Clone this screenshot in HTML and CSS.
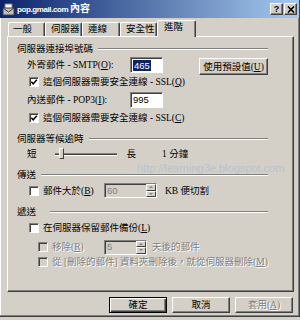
FILE: index.html
```html
<!DOCTYPE html>
<html lang="zh-Hant">
<head>
    <meta charset="UTF-8">
    <meta name="viewport" content="width=device-width, initial-scale=1.0">
    <title>pop.gmail.com 內容</title>
    <link rel="stylesheet" href="styles.css">
</head>
<body>
    <div class="window">
        <div class="titlebar">
            <svg class="title-icon" viewBox="0 0 13 13">
                <path d="M3 1h7v6H3z" fill="#fff" stroke="#808080"/>
                <path d="M1 5h11v7H1z" fill="#c0c0c0" stroke="#404040"/>
                <path d="M1 5l5.5 4L12 5" fill="none" stroke="#404040"/>
            </svg>
            <span class="title-text">pop.gmail.com <span class="cjk">內容</span></span>
            <div class="title-buttons">
                <span class="title-btn">?</span>
                <span class="title-btn">
                    <svg viewBox="0 0 8 7" width="8" height="7"><path d="M1 0.5l6 6M7 0.5l-6 6" stroke="#000" stroke-width="1.6"/></svg>
                </span>
            </div>
        </div>

        <div class="tabs">
            <div class="tab tab-general">一般</div>
            <div class="tab tab-server">伺服器</div>
            <div class="tab tab-connect">連線</div>
            <div class="tab tab-security">安全性</div>
            <div class="tab tab-advanced active">進階</div>
        </div>

        <div class="panel">
            <div class="group-title">伺服器連接埠號碼</div>
            <div class="row row-tall">
                <span class="label">外寄郵件 - SMTP(<u>O</u>):</span>
                <span class="field port"><span class="selected">465</span></span>
                <span class="btn defaults">使用預設值(<u>U</u>)</span>
            </div>
            <div class="row">
                <span class="check"><svg viewBox="0 0 8 8"><path d="M1.3 3.8l1.9 2 3.6-4" fill="none" stroke="#000" stroke-width="1.5"/></svg></span>
                <span>這個伺服器需要安全連線 - SSL(<u>Q</u>)</span>
            </div>
            <div class="row row-field gap">
                <span class="label">內送郵件 - POP3(<u>I</u>):</span>
                <span class="field port">995</span>
            </div>
            <div class="row gap">
                <span class="check"><svg viewBox="0 0 8 8"><path d="M1.3 3.8l1.9 2 3.6-4" fill="none" stroke="#000" stroke-width="1.5"/></svg></span>
                <span>這個伺服器需要安全連線 - SSL(<u>C</u>)</span>
            </div>

            <div class="group-title">伺服器等候逾時</div>
            <div class="row">
                <span>短</span>
                <span class="slider"><span class="thumb"></span></span>
                <span>長</span>
                <span class="timeout">1 分鐘</span>
            </div>

            <div class="group-title">傳送</div>
            <div class="row row-spin">
                <span class="check"></span>
                <span class="size-label">郵件大於(<u>B</u>)</span>
                <span class="field spinner size-field">60<span class="spin"><i class="up"></i><i class="down"></i></span></span>
                <span class="unit">KB 便切割</span>
            </div>

            <div class="group-title wide">遞送</div>
            <div class="row gap-sm">
                <span class="check"></span>
                <span>在伺服器保留郵件備份(<u>L</u>)</span>
            </div>
            <div class="row indent disabled gap-lg">
                <span class="check"></span>
                <span class="remove-label">移除(<u>R</u>)</span>
                <span class="field spinner days-field">5<span class="spin"><i class="up"></i><i class="down"></i></span></span>
                <span class="days">天後的郵件</span>
            </div>
            <div class="row indent disabled">
                <span class="check"></span>
                <span>從 [刪除的郵件] 資料夾刪除後，就從伺服器刪除(<u>M</u>)</span>
            </div>
        </div>

        <div class="actions">
            <span class="action default">確定</span>
            <span class="action">取消</span>
            <span class="action disabled">套用(<u>A</u>)</span>
        </div>

        <div class="watermark">http://learning3e.blogspot.com</div>
    </div>
</body>
</html>
```

FILE: styles.css
```css
* {
    box-sizing: border-box;
}

body {
    margin: 0;
    width: 300px;
    height: 320px;
    overflow: hidden;
    background: #d4d0c8;
    font-family: "Liberation Serif", "Noto Sans CJK TC", serif;
    font-size: 9.5px;
    line-height: 14px;
    color: #000;
}

u {
    text-underline-offset: 1px;
}

.window {
    position: relative;
    height: 317px;
    border-right: 1px solid #404040;
    border-bottom: 1px solid #404040;
    box-shadow: inset -1px -1px #808080, inset 1px 0 #fff;
}

/* title bar */
.titlebar {
    height: 18px;
    display: flex;
    align-items: center;
    padding: 0 2px 0 2px;
    background: linear-gradient(to right, #0a246a, #a6caf0);
    color: #fff;
}

.title-icon {
    width: 13px;
    height: 13px;
    margin-right: 2px;
}

.title-text {
    font-family: "Liberation Sans", "Noto Sans CJK TC", sans-serif;
    font-weight: bold;
    font-size: 8px;
    letter-spacing: -0.4px;
}

.title-text .cjk {
    font-size: 10px;
    letter-spacing: 0;
}

.title-buttons {
    margin-left: auto;
    display: flex;
    gap: 1px;
}

.title-btn {
    width: 13px;
    height: 12px;
    display: flex;
    align-items: center;
    justify-content: center;
    background: #d4d0c8;
    border: 1px solid;
    border-color: #fff #404040 #404040 #fff;
    box-shadow: inset -1px -1px #808080;
    color: #000;
    font: bold 9px/1 "Liberation Sans", sans-serif;
}

/* tabs */
.tabs {
    position: relative;
    z-index: 1;
    display: flex;
    align-items: flex-end;
    height: 16px;
    margin-top: 2px;
    padding-left: 8px;
}

.tab {
    height: 14px;
    padding-left: 5px;
    line-height: 12px;
    border-top: 1px solid #fff;
    border-left: 1px solid #fff;
    border-right: 1px solid #404040;
    border-radius: 2px 2px 0 0;
    box-shadow: inset -1px 0 #808080;
}

.tab-general { width: 37px; padding-left: 4px; }
.tab-server { width: 37px; }
.tab-connect { width: 38px; }
.tab-security { width: 37px; }
.tab-advanced { width: 39px; }

.tab.active {
    height: 17px;
    margin-bottom: -1px;
    padding-left: 6px;
    background: #d4d0c8;
}

/* panel */
.panel {
    width: 287px;
    height: 256px;
    margin-left: 7px;
    padding: 5px 25px 0 9px;
    border: 1px solid;
    border-color: #fff #404040 #404040 #fff;
    box-shadow: inset -1px -1px #808080;
}

.group-title {
    display: flex;
    align-items: center;
    height: 14px;
    margin-top: 7px;
}

.group-title:first-child {
    margin-top: 0;
}

.group-title::after {
    content: "";
    flex: 1;
    margin-left: 5px;
    border-top: 1px solid #808080;
    border-bottom: 1px solid #fff;
}

.group-title.wide::after {
    margin-left: 14px;
}

.row {
    display: flex;
    align-items: center;
    height: 14px;
    margin-top: 1px;
    padding-left: 10px;
    white-space: nowrap;
}

.row-tall { height: 17px; align-items: flex-start; }
.row-field { height: 16px; }
.row-spin { height: 15px; }
.gap { margin-top: 3px; }
.gap-sm { margin-top: 2px; }
.gap-lg { margin-top: 5px; }
.indent { padding-left: 19px; }

.row-tall .label {
    line-height: 16px;
}

.label {
    width: 103px;
}

.disabled {
    color: #808080;
    text-shadow: 1px 1px 0 #fff;
}

/* inputs */
.field {
    display: flex;
    align-items: center;
    height: 16px;
    padding-left: 2px;
    background: #fff;
    border: 1px solid;
    border-color: #808080 #fff #fff #808080;
    box-shadow: inset 1px 1px #404040;
    font-family: "Liberation Sans", sans-serif;
    font-size: 9.5px;
    color: #000;
    text-shadow: none;
}

.port {
    width: 33px;
}

.selected {
    background: #0a246a;
    color: #fff;
    line-height: 11px;
    padding: 0 1px;
}

.btn {
    display: flex;
    align-items: center;
    justify-content: center;
    width: 69px;
    height: 17px;
    margin-left: auto;
    margin-top: 1px;
    border: 1px solid;
    border-color: #fff #404040 #404040 #fff;
    box-shadow: inset -1px -1px #808080;
}

.check {
    flex: none;
    width: 10px;
    height: 10px;
    margin: 0 4px 0 2px;
    background: #fff;
    border: 1px solid;
    border-color: #808080 #fff #fff #808080;
    box-shadow: inset 1px 1px #404040;
}

.check svg {
    display: block;
    width: 8px;
    height: 8px;
}

.disabled .check {
    background: #d4d0c8;
}

.spinner {
    height: 15px;
    background: #d4d0c8;
    color: #808080;
}

.spin {
    display: flex;
    flex-direction: column;
    width: 10px;
    height: 13px;
    margin-left: auto;
}

.spin i {
    position: relative;
    flex: 1;
    border: 1px solid;
    border-color: #fff #404040 #404040 #fff;
    background: #d4d0c8;
}

.spin i::after {
    content: "";
    position: absolute;
    left: 2px;
    top: 1px;
    border-left: 2px solid transparent;
    border-right: 2px solid transparent;
}

.spin .up::after { border-bottom: 2px solid #808080; }
.spin .down::after { border-top: 2px solid #808080; }

.size-label { width: 61px; }
.size-field { width: 53px; }
.unit { margin-left: 8px; }

.remove-label { width: 52px; }
.days-field { width: 43px; }
.days { margin-left: 5px; }

/* slider */
.slider {
    position: relative;
    width: 62px;
    height: 3px;
    margin: 0 10px 0 18px;
    border-top: 1px solid #808080;
    border-bottom: 1px solid #fff;
    background: #404040;
}

.thumb {
    position: absolute;
    left: 4px;
    top: -6px;
    width: 5px;
    height: 11px;
    background: #d4d0c8;
    border: 1px solid;
    border-color: #fff #404040 #404040 #fff;
}

.timeout {
    margin-left: 26px;
}

/* bottom buttons */
.actions {
    display: flex;
    justify-content: flex-end;
    gap: 5px;
    margin-top: 5px;
    padding-right: 6px;
}

.action {
    display: flex;
    align-items: center;
    justify-content: center;
    width: 58px;
    height: 16px;
    border: 1px solid;
    border-color: #fff #404040 #404040 #fff;
    box-shadow: inset -1px -1px #808080;
}

.action.default {
    border-color: #000;
    box-shadow: inset 1px 1px #fff, inset -1px -1px #404040, inset -2px -2px #808080;
}

.action.disabled {
    color: #808080;
    text-shadow: 1px 1px 0 #fff;
}

.watermark {
    position: absolute;
    left: 137px;
    top: 161px;
    font: 11px/14px "Liberation Sans", sans-serif;
    color: rgba(140, 165, 215, 0.4);
    pointer-events: none;
}
```
